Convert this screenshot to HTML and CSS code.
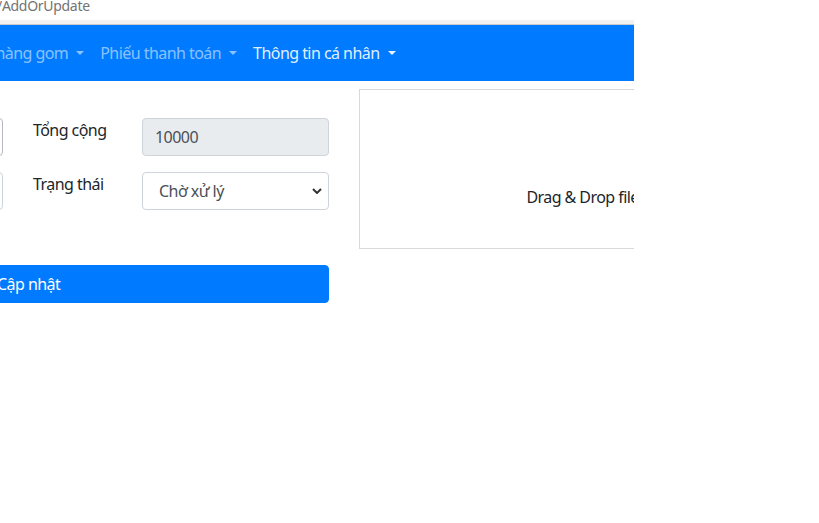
FILE: index.html
```html
<!DOCTYPE html>
<html lang="vi">
<head>
<meta charset="utf-8">
<title>AddOrUpdate</title>
<link rel="stylesheet" href="styles.css">
</head>
<body>
<div class="viewport">
  <div class="urlbar"><span class="url">/AddOrUpdate</span></div>
  <div class="band"></div>
  <nav class="navbar">
    <ul class="nav">
      <li class="nav-link">Đơn hàng gom<span class="caret"></span></li>
      <li class="nav-link">Phiếu thanh toán<span class="caret"></span></li>
      <li class="nav-link active">Thông tin cá nhân<span class="caret"></span></li>
    </ul>
  </nav>
  <main class="content">
    <form class="form">
      <div class="form-row">
        <input class="control left" type="text" value="">
        <label class="label">Tổng cộng</label>
        <input class="control" type="text" value="10000" disabled>
      </div>
      <div class="form-row">
        <input class="control left light" type="text" value="">
        <label class="label">Trạng thái</label>
        <select class="control select">
          <option>Chờ xử lý</option>
        </select>
      </div>
      <button class="btn" type="button">Cập nhật</button>
    </form>
    <div class="dropzone">
      <span class="dz-text">Drag &amp; Drop files here</span>
    </div>
  </main>
</div>
</body>
</html>
```

FILE: styles.css
```css
* { box-sizing: border-box; }
html, body {
  margin: 0;
  background: #fff;
}
body {
  font-family: "Noto Sans", "Open Sans", sans-serif;
  font-size: 16px;
  line-height: 24px;
  letter-spacing: -0.55px;
  color: #212529;
}
.viewport {
  width: 634px;
  height: 523px;
  overflow: hidden;
}
.urlbar {
  height: 20px;
  overflow: hidden;
}
.url {
  display: block;
  margin-left: -3px;
  margin-top: -4px;
  font-size: 14px;
  letter-spacing: -0.3px;
  line-height: 20px;
  color: #737373;
}
.band {
  height: 5px;
  background: #f1f1f1;
  border-bottom: 1px solid #c9c9c9;
}
.navbar {
  height: 56px;
  background: #007bff;
  padding: 8px 0;
}
.nav {
  list-style: none;
  margin: 0 0 0 -46px;
  padding: 0;
  display: flex;
  white-space: nowrap;
}
.nav-link {
  padding: 8px 8px;
  color: rgba(255, 255, 255, 0.55);
}
.nav-link.active {
  color: rgba(255, 255, 255, 0.9);
}
.caret {
  display: inline-block;
  margin-left: 8px;
  vertical-align: 0.255em;
  border-top: 0.3em solid;
  border-left: 0.3em solid transparent;
  border-right: 0.3em solid transparent;
}
.content {
  display: grid;
  grid-template-columns: 529px 484px;
  column-gap: 30px;
  margin-left: -200px;
  padding-top: 8px;
}
.form {
  padding-top: 29px;
}
.form-row {
  display: grid;
  grid-template-columns: minmax(0, 1fr) 109px 187px;
  margin-bottom: 16px;
}
.control {
  width: 100%;
  min-width: 0;
  height: 38px;
  padding: 6px 12px;
  font: inherit;
  letter-spacing: inherit;
  color: #495057;
  background: #fff;
  border: 1px solid #ced4da;
  border-radius: 4px;
}
.control.left {
  width: auto;
  margin-right: 30px;
  border-color: #b6babe;
}
.control.left.light {
  border-color: #ced4da;
}
.control:disabled {
  background: #e9ecef;
}
.label {
  display: block;
}
.select {
  appearance: none;
  -webkit-appearance: none;
  padding-left: 16px;
  background-image: url("data:image/svg+xml,%3Csvg xmlns='http://www.w3.org/2000/svg' width='10' height='6' viewBox='0 0 10 6'%3E%3Cpath d='M1 1l4 4 4-4' fill='none' stroke='%23333' stroke-width='2'/%3E%3C/svg%3E");
  background-repeat: no-repeat;
  background-position: right 6px center;
  background-size: 10px 6px;
}
.btn {
  display: block;
  width: 100%;
  height: 38px;
  margin-top: 55px;
  padding: 6px 0 6px 196px;
  text-align: left;
  font: inherit;
  letter-spacing: inherit;
  color: #fff;
  background: #007bff;
  border: 1px solid #007bff;
  border-radius: 4px;
}
.dropzone {
  height: 160px;
  border: 1px solid #d9d9d9;
  display: flex;
  align-items: center;
  justify-content: center;
  padding-top: 56px;
  padding-left: 6px;
}
.dz-text {
  white-space: nowrap;
}
```
